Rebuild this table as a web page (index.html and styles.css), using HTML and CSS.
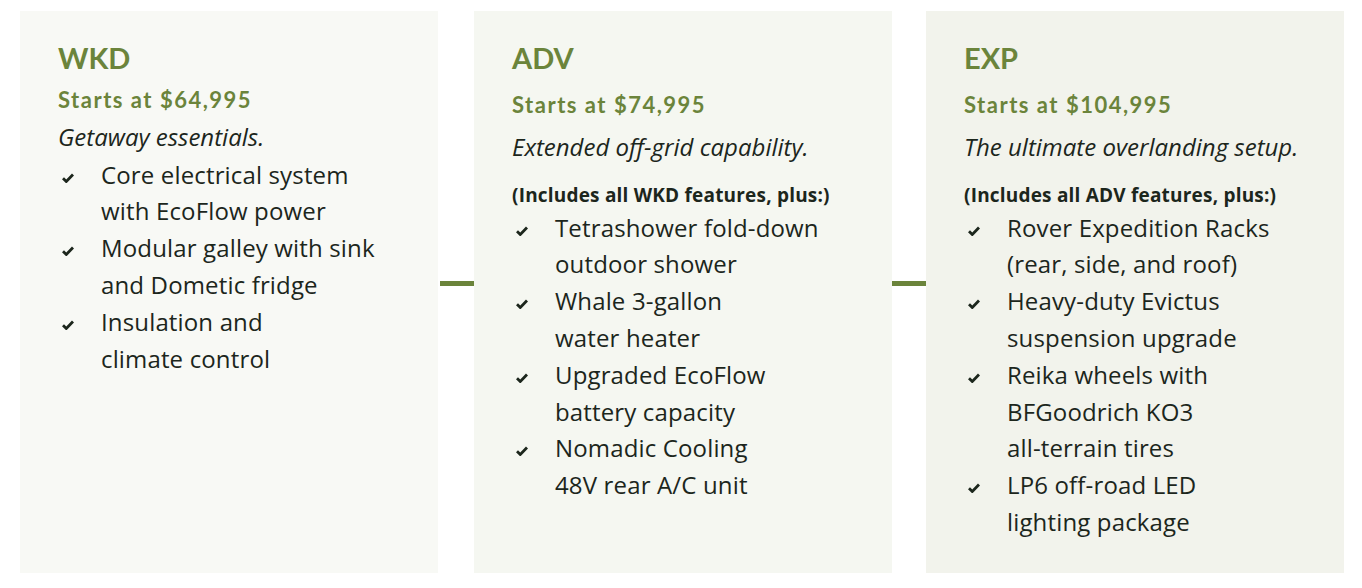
FILE: index.html
```html
<!DOCTYPE html>
<html>
<head>
  <title>Build Tiers</title>
  <link rel="stylesheet" href="styles.css">
</head>
<body>
  <section class="tiers">

    <article class="tier tier--wkd">
      <h2 class="tier__name">WKD</h2>
      <p class="tier__price">Starts at $64,995</p>
      <p class="tier__tagline">Getaway essentials.</p>
      <ul class="tier__list">
        <li><svg class="check" viewBox="0 0 12 10"><path d="M1 5.2l3.3 3.3L11 1.6"/></svg><span>Core electrical system<br>with EcoFlow power</span></li>
        <li><svg class="check" viewBox="0 0 12 10"><path d="M1 5.2l3.3 3.3L11 1.6"/></svg><span>Modular galley with sink<br>and Dometic fridge</span></li>
        <li><svg class="check" viewBox="0 0 12 10"><path d="M1 5.2l3.3 3.3L11 1.6"/></svg><span>Insulation and<br>climate control</span></li>
      </ul>
    </article>

    <div class="connector"><span class="connector__line"></span></div>

    <article class="tier tier--adv tier--plus">
      <h2 class="tier__name">ADV</h2>
      <p class="tier__price">Starts at $74,995</p>
      <p class="tier__tagline">Extended off-grid capability.</p>
      <p class="tier__note">(Includes all WKD features, plus:)</p>
      <ul class="tier__list">
        <li><svg class="check" viewBox="0 0 12 10"><path d="M1 5.2l3.3 3.3L11 1.6"/></svg><span>Tetrashower fold-down<br>outdoor shower</span></li>
        <li><svg class="check" viewBox="0 0 12 10"><path d="M1 5.2l3.3 3.3L11 1.6"/></svg><span>Whale 3-gallon<br>water heater</span></li>
        <li><svg class="check" viewBox="0 0 12 10"><path d="M1 5.2l3.3 3.3L11 1.6"/></svg><span>Upgraded EcoFlow<br>battery capacity</span></li>
        <li><svg class="check" viewBox="0 0 12 10"><path d="M1 5.2l3.3 3.3L11 1.6"/></svg><span>Nomadic Cooling<br>48V rear A/C unit</span></li>
      </ul>
    </article>

    <div class="connector"><span class="connector__line"></span></div>

    <article class="tier tier--exp tier--plus">
      <h2 class="tier__name">EXP</h2>
      <p class="tier__price">Starts at $104,995</p>
      <p class="tier__tagline">The ultimate overlanding setup.</p>
      <p class="tier__note">(Includes all ADV features, plus:)</p>
      <ul class="tier__list">
        <li><svg class="check" viewBox="0 0 12 10"><path d="M1 5.2l3.3 3.3L11 1.6"/></svg><span>Rover Expedition Racks<br>(rear, side, and roof)</span></li>
        <li><svg class="check" viewBox="0 0 12 10"><path d="M1 5.2l3.3 3.3L11 1.6"/></svg><span>Heavy-duty Evictus<br>suspension upgrade</span></li>
        <li><svg class="check" viewBox="0 0 12 10"><path d="M1 5.2l3.3 3.3L11 1.6"/></svg><span>Reika wheels with<br>BFGoodrich KO3<br>all-terrain tires</span></li>
        <li><svg class="check" viewBox="0 0 12 10"><path d="M1 5.2l3.3 3.3L11 1.6"/></svg><span>LP6 off-road LED<br>lighting package</span></li>
      </ul>
    </article>

  </section>
</body>
</html>
```

FILE: styles.css
```css
body {
  margin: 0;
  background-color: #ffffff;
  font-family: 'Open Sans', 'Noto Sans', sans-serif;
  color: #1c261c;
}

.tiers {
  display: grid;
  grid-template-columns: 418px 36px 418px 34px 418px;
  padding: 11px 18px 15px 20px;
}

.tier {
  min-height: 562px;
  box-sizing: border-box;
  padding: 29px 30px 20px 38px;
}

.tier--wkd {
  background-color: #f8f9f5;
}

.tier--adv {
  background-color: #f5f7f1;
}

.tier--exp {
  background-color: #f2f3ec;
}

.tier__name {
  margin: 0;
  font-family: 'Lato', sans-serif;
  font-size: 29px;
  line-height: 36px;
  font-weight: 700;
  color: #6b843b;
}

.tier__price {
  margin: 9px 0 0;
  font-family: 'Lato', sans-serif;
  font-size: 22px;
  line-height: 30px;
  font-weight: 700;
  letter-spacing: 1.5px;
  color: #6b843b;
}

.tier__tagline {
  margin: 4px 0 0;
  font-size: 24px;
  line-height: 36.6px;
  font-style: italic;
}

.tier--plus .tier__price {
  margin-top: 14px;
}

.tier--plus .tier__tagline {
  margin-top: 9px;
}

.tier__note {
  margin: 17px 0 0;
  font-size: 19px;
  line-height: 24px;
  font-weight: 700;
  letter-spacing: 0.2px;
}

.tier__list {
  list-style: none;
  margin: 1px 0 0;
  padding: 0;
}

.tier--plus .tier__list {
  margin-top: 3px;
}

.tier__list li {
  display: flex;
  align-items: flex-start;
  font-size: 24px;
  line-height: 36.8px;
  letter-spacing: 0.15px;
}

.check {
  flex: 0 0 12px;
  width: 12px;
  height: 10px;
  margin: 16px 27px 0 4px;
  fill: none;
  stroke: #1c261c;
  stroke-width: 2.8;
}

.connector {
  display: flex;
  justify-content: flex-end;
}

.connector__line {
  width: 34px;
  height: 5px;
  margin-top: 270px;
  background-color: #6b843b;
}
```
